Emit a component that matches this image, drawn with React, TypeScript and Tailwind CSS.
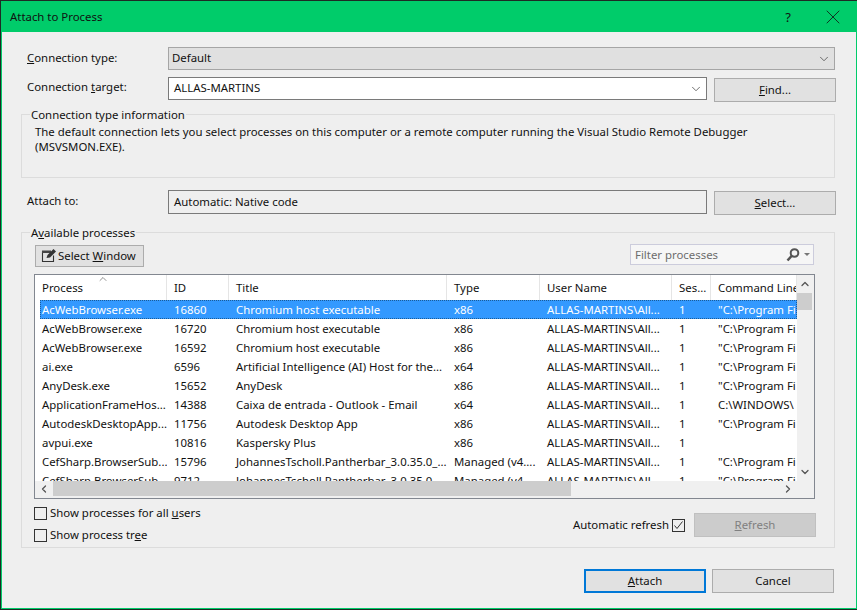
import { ChevronDown, ChevronUp, ChevronLeft, ChevronRight, X } from 'lucide-react'

const rows = [
  ['AcWebBrowser.exe', '16860', 'Chromium host executable', 'x86', 'ALLAS-MARTINS\\All...', '1', '"C:\\Program Fi'],
  ['AcWebBrowser.exe', '16720', 'Chromium host executable', 'x86', 'ALLAS-MARTINS\\All...', '1', '"C:\\Program Fi'],
  ['AcWebBrowser.exe', '16592', 'Chromium host executable', 'x86', 'ALLAS-MARTINS\\All...', '1', '"C:\\Program Fi'],
  ['ai.exe', '6596', 'Artificial Intelligence (AI) Host for the...', 'x64', 'ALLAS-MARTINS\\All...', '1', '"C:\\Program Fi'],
  ['AnyDesk.exe', '15652', 'AnyDesk', 'x86', 'ALLAS-MARTINS\\All...', '1', '"C:\\Program Fi'],
  ['ApplicationFrameHos...', '14388', 'Caixa de entrada - Outlook - Email', 'x64', 'ALLAS-MARTINS\\All...', '1', 'C:\\WINDOWS\\'],
  ['AutodeskDesktopApp...', '11756', 'Autodesk Desktop App', 'x86', 'ALLAS-MARTINS\\All...', '1', '"C:\\Program Fi'],
  ['avpui.exe', '10816', 'Kaspersky Plus', 'x86', 'ALLAS-MARTINS\\All...', '1', ''],
  ['CefSharp.BrowserSub...', '15796', 'JohannesTscholl.Pantherbar_3.0.35.0_...', 'Managed (v4....', 'ALLAS-MARTINS\\All...', '1', '"C:\\Program Fi'],
  ['CefSharp.BrowserSub...', '9712', 'JohannesTscholl.Pantherbar_3.0.35.0_...', 'Managed (v4....', 'ALLAS-MARTINS\\All...', '1', '"C:\\Program Fi'],
]

const headers = ['Process', 'ID', 'Title', 'Type', 'User Name', 'Ses...', 'Command Line']
const headerWidths = ['w-[132px]', 'w-[62px]', 'w-[218px]', 'w-[93px]', 'w-[132px]', 'w-[39px]', 'w-[86px]']
const cellWidths = ['w-[127px] pl-[2px]', 'w-[62px] pl-[7px]', 'w-[218px] pl-[7px]', 'w-[93px] pl-[7px]', 'w-[132px] pl-[7px]', 'w-[39px] pl-[7px]', 'w-[86px] pl-[7px]']

function Btn({ label, u, className }: { label: string; u: number; className: string }) {
  return (
    <button className={`flex h-6 w-[122px] items-center justify-center border border-[#acacac] bg-[#e1e1e1] ${className}`}>
      <span>
        {label.slice(0, u)}
        <span className="underline">{label[u]}</span>
        {label.slice(u + 1)}
      </span>
    </button>
  )
}

function Check({ checked }: { checked?: boolean }) {
  return (
    <span className="flex h-[13px] w-[13px] shrink-0 items-center justify-center border border-[#333] bg-transparent">
      {checked && (
        <svg width="11" height="11" viewBox="0 0 11 11" fill="none" stroke="#333" strokeWidth="1">
          <path d="M1.5 5.5 L4 8.5 L9.5 1.5" />
        </svg>
      )}
    </span>
  )
}

export default function App() {
  return (
    <div className="h-[610px] w-[857px] overflow-hidden border-b border-l border-t border-[#1e2a25]">
      <div className="flex h-full flex-col border-b border-l border-r border-[#00cc6a] bg-[#efefef] font-['Noto_Sans',sans-serif] text-[11.4px] leading-4 text-[#111]">
        {/* Title bar */}
        <div className="flex h-[31px] shrink-0 items-center justify-between bg-[#00cc6a] pl-[8px] pr-[11px]">
          <span>Attach to Process</span>
          <div className="flex items-center gap-[30px]">
            <span className="text-[13px]">?</span>
            <X size={24} strokeWidth={0.8} />
          </div>
        </div>

        <div className="flex flex-1 flex-col px-[19px] pt-[15px]">
          {/* Connection type */}
          <div className="flex items-center pl-[6px]">
            <span className="w-[141px] pb-[1px]"><span className="underline">C</span>onnection type:</span>
            <div className="flex h-[23px] w-[667px] items-center justify-between border border-[#a5a5a5] bg-[#e0e0e0] px-[3px]">
              <span className="pb-[1px]">Default</span>
              <ChevronDown size={14} strokeWidth={1.3} className="text-[#444]" />
            </div>
          </div>

          {/* Connection target */}
          <div className="mt-[7px] flex items-start pl-[6px]">
            <span className="mt-[2px] w-[141px]">Connection <span className="underline">t</span>arget:</span>
            <div className="flex h-[23px] w-[539px] items-center justify-between border border-[#7a7a7a] bg-white pl-[5px] pr-[3px]">
              <span className="pb-[1px]">ALLAS-MARTINS</span>
              <ChevronDown size={14} strokeWidth={1.3} className="text-[#444]" />
            </div>
            <Btn label="Find..." u={0} className="ml-[7px] mt-[1px]" />
          </div>

          {/* Connection type information */}
          <div className="relative mt-[12px] h-[64px] w-[814px] border border-[#dcdcdc] pl-[13px] pt-[9px]">
            <span className="absolute left-[8px] top-[-8px] bg-[#efefef] px-[1px]">Connection type information</span>
            <p className="leading-[15px]">
              The default connection lets you select processes on this computer or a remote computer running the Visual Studio Remote Debugger
              <br />
              (MSVSMON.EXE).
            </p>
          </div>

          {/* Attach to */}
          <div className="mt-[12px] flex items-start pl-[6px]">
            <span className="mt-[3px] w-[141px]">Attach to:</span>
            <div className="flex h-[24px] w-[539px] items-center border border-[#7a7a7a] bg-[#efefef] pl-[5px]">
              <span className="pb-[1px]">Automatic: Native code</span>
            </div>
            <Btn label="Select..." u={0} className="ml-[7px] mt-[1px]" />
          </div>

          {/* Available processes */}
          <div className="relative mt-[17px] h-[316px] w-[814px] border border-[#dcdcdc] pl-[12px] pt-[12px]">
            <span className="absolute left-[8px] top-[-8px] bg-[#efefef] px-[1px]">A<span className="underline">v</span>ailable processes</span>

            <div className="flex items-start justify-between pr-[20px]">
              <button className="ml-[1px] flex h-[22px] w-[109px] items-center border border-[#acacac] bg-[#e1e1e1] pl-[5px]">
                <svg width="16" height="16" viewBox="0 0 16 16" fill="none" className="mr-[1px] shrink-0">
                  <path d="M1.5 3.5 V13.5 H12.5 V7.5" stroke="#333" strokeWidth="1.1" />
                  <path d="M1 2.5 H10 V5 H1 Z" fill="#444" />
                  <path d="M5.5 10 L6.5 7 L12.5 1 L15 3.5 L9 9.5 Z" fill="#333" />
                </svg>
                <span>Select <span className="underline">W</span>indow</span>
              </button>
              <div className="-mt-[1px] flex h-[21px] w-[184px] items-center justify-between border border-[#ccccdc] bg-[#f6f6f6] pl-[4px] pr-[3px] text-[#6d6d6d]">
                <span>Filter processes</span>
                <div className="flex items-center gap-[4px]">
                  <svg width="14" height="14" viewBox="0 0 14 14" fill="none" stroke="#555" strokeWidth="2">
                    <circle cx="8.5" cy="5" r="3.8" />
                    <path d="M6 7.5 L1.5 12.5" strokeWidth="2.6" />
                  </svg>
                  <span className="h-0 w-0 border-x-[3px] border-t-[3px] border-x-transparent border-t-[#777]" />
                </div>
              </div>
            </div>

            {/* Process list */}
            <div className="mt-[7px] flex h-[225px] w-[781px] flex-col border border-[#828790] bg-white">
              <div className="flex h-[206px] min-h-0">
                <div className="relative flex-1 overflow-hidden">
                  <ChevronUp size={12} strokeWidth={1.3} className="absolute left-[62px] top-[-2px] text-[#555]" />
                  <div className="flex h-[25px]">
                    {headers.map((h, i) => (
                      <div key={h} className={`${headerWidths[i]} flex shrink-0 items-center overflow-hidden whitespace-nowrap border-r border-[#e5e5e5] pl-[7px]`}>
                        {h}
                      </div>
                    ))}
                  </div>
                  {rows.map((row, r) => (
                    <div key={r} className={`ml-[5px] flex h-[19px] items-center whitespace-nowrap ${r === 0 ? 'bg-[#3399ff] text-white outline-1 outline-dotted -outline-offset-1 outline-[#1a5c99]' : ''}`}>
                      {row.map((cell, c) => (
                        <div key={c} className={`${cellWidths[c]} shrink-0 overflow-hidden`}>
                          {cell}
                        </div>
                      ))}
                    </div>
                  ))}
                </div>
                {/* vertical scrollbar */}
                <div className="flex w-[17px] shrink-0 flex-col bg-[#f0f0f0]">
                  <div className="flex h-[18px] w-[15px] items-center justify-center"><ChevronUp size={12} strokeWidth={2.6} className="text-[#555]" /></div>
                  <div className="h-[17px] w-[15px] bg-[#cdcdcd]" />
                  <div className="flex-1" />
                  <div className="flex h-[18px] w-[15px] items-center justify-center"><ChevronDown size={12} strokeWidth={2.6} className="text-[#555]" /></div>
                </div>
              </div>
              {/* horizontal scrollbar */}
              <div className="flex h-[17px] shrink-0 items-start bg-[#f0f0f0]">
                <div className="flex h-[15px] w-[18px] shrink-0 items-center justify-center"><ChevronLeft size={12} strokeWidth={2.6} className="text-[#555]" /></div>
                <div className="h-[15px] w-[518px] bg-[#cdcdcd]" />
                <div className="flex h-[15px] flex-1 items-center justify-end pr-[20px]"><ChevronRight size={12} strokeWidth={2.6} className="text-[#555]" /></div>
              </div>
            </div>

            {/* Options */}
            <div className="mt-[6px] flex items-start justify-between pr-[18px]">
              <div className="flex flex-col gap-[6px]">
                <label className="flex items-center gap-[3px]"><Check /><span>Show processes for all <span className="underline">u</span>sers</span></label>
                <label className="flex items-center gap-[3px]"><Check /><span>Show process tr<span className="underline">e</span>e</span></label>
              </div>
              <div className="mt-[8px] flex items-center">
                <span className="mr-[3px]">Automatic refresh</span>
                <Check checked />
                <Btn label="Refresh" u={0} className="ml-[9px] !border-[#c0c0c0] !bg-[#cccccc] text-[#808080]" />
              </div>
            </div>
          </div>

          {/* Footer */}
          <div className="mt-[21px] flex justify-end gap-[6px] pr-[3px]">
            <Btn label="Attach" u={0} className="!border-2 !border-[#0078d7]" />
            <button className="flex h-6 w-[122px] items-center justify-center border border-[#acacac] bg-[#e1e1e1]">Cancel</button>
          </div>
        </div>
      </div>
    </div>
  )
}
